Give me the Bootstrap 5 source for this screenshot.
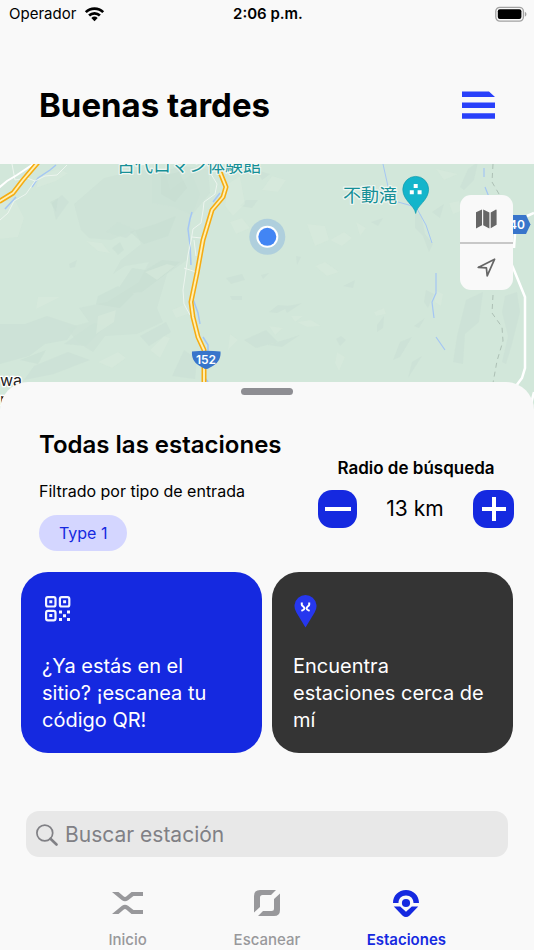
<!DOCTYPE html>
<html lang="es">
<head>
<meta charset="utf-8">
<meta name="viewport" content="width=device-width, initial-scale=1">
<title>Estaciones</title>
<link rel="stylesheet" href="https://cdn.jsdelivr.net/npm/bootstrap@5.3.0/dist/css/bootstrap.min.css">
<style>
  body { font-family: Inter, "Noto Sans CJK JP", sans-serif; background: #f9f9f9; color: #000; font-size: 16px; line-height: 20px; }
  svg { display: block; }
  .status-bar { height: 28px; padding: 0 7px 0 9px; font-size: 15px; }
  .top-head { height: 136px; padding: 18px 39px 0 39px; }
  .greeting { font-size: 33px; line-height: 40px; font-weight: 700; }
  .map-area svg.map-art { width: 100%; height: 254px; }
  .map-tools { top: 31px; right: 21px; width: 53px; background: #f9f9f9; border-radius: 11px; }
  .map-tools button { height: 47px; }
  .map-tools button + button { border-top: 2px solid #c8c8c8 !important; height: 48px; }
  .sheet { margin-top: -36px; background: #f9f9f9; border-radius: 28px 28px 0 0; padding-top: 6px; }
  .grabber { width: 52px; height: 7px; border-radius: 4px; background: #8e8e93; }
  .filters { padding: 34px 20px 0 39px; }
  .sheet-title { font-size: 24px; line-height: 32px; font-weight: 600; }
  .filter-note { margin: 20px 0 14px; }
  .chip { background: #d4d6ff; color: #1529e0; border-radius: 18px; height: 36px; padding: 0 20px; }
  .radius-box { width: 196px; padding-top: 29px; }
  .radius-title { font-size: 17px; }
  .radius-value { font-size: 21px; line-height: 28px; }
  .step-btn { background: #1529e0; border-radius: 14px; height: 38px; width: 39px; }
  .step-btn.step-plus { width: 41px; }
  .tiles { padding: 21px 21px 0; gap: 10px; }
  .tile { flex: 1 1 0; height: 181px; border-radius: 27px; padding: 22px 28px 19px 21px; font-size: 20px; line-height: 27px; color: #fff; text-decoration: none; }
  .tile-blue { background: #1529e0; }
  .tile-dark { background: #343434; }
  .search-wrap { padding: 58px 26px 0; }
  .search-box { height: 46px; border-radius: 13px; background: #e8e8e8; padding: 1px 10px 0; gap: 7px; }
  .search-box input { font-size: 21px; line-height: 28px; color: #808085; outline: 0; }
  .search-box input::placeholder { color: #808085; opacity: 1; }
  .tabs { padding: 31px 58px 0; font-size: 15px; line-height: 18px; font-weight: 500; }
  .tabs a { flex: 1 1 0; color: #98989b; text-decoration: none; gap: 13px; }
  .tabs a.current { color: #1529e0; font-weight: 600; }
</style>
<script src="https://cdn.jsdelivr.net/npm/bootstrap@5.3.0/dist/js/bootstrap.bundle.min.js"></script>
</head>
<body>
<div class="status-bar d-flex align-items-center">
  <div class="col d-flex align-items-center gap-2">
    <span>Operador</span>
    <svg width="21" height="16" viewBox="0 0 21 16" fill="none" stroke="#000" stroke-width="2.700" aria-hidden="true"><path d="M1.800 6.100a12.500 12.500 0 0 1 17.400 0M5.100 9.500a7.800 7.800 0 0 1 10.800 0"/><path d="M10.500 15.200l-3.200-3.300a4.700 4.700 0 0 1 6.400 0z" fill="#000" stroke="none"/></svg>
  </div>
  <div class="fw-semibold">2:06 p.m.</div>
  <div class="col d-flex justify-content-end">
    <svg width="32" height="16" viewBox="0 0 32 16" aria-hidden="true"><rect x=".8" y="1.300" width="27.600" height="13.800" rx="4" fill="none" stroke="#a2a2a2" stroke-width="1.300"/><rect x="2.800" y="3.300" width="23.600" height="9.800" rx="2" fill="#000"/><path d="M29.800 5.800c2.200.8 2.200 4 0 4.800z" fill="#a2a2a2"/></svg>
  </div>
</div>

<header class="top-head d-flex align-items-center justify-content-between">
  <h1 class="greeting mb-0">Buenas tardes</h1>
  <button class="btn border-0 p-0" type="button" aria-label="Menú">
    <svg width="33" height="28" viewBox="0 0 33 28" fill="#2940fa"><path d="M0 .5h27l6 5.500H0zM0 11.400h33v5.600H0zM0 22.300h33v5.400H0z"/></svg>
  </button>
</header>

<main>
  <section class="map-area position-relative overflow-hidden" aria-label="Mapa">
    <svg class="map-art" viewBox="0 164 534 254" preserveAspectRatio="xMidYMid slice">
      <rect x="-400" y="164" width="1400" height="254" fill="#d2e7da"/>
      <!-- terrain relief -->
      <g fill="#cce1d6">
        <path opacity=".75" d="M74 204l30-26 34-8 27 2 5 18 22-16 8 20-9 24-4 42-20 14-10 34 6 14-26 12-32 2-12 16-16-10-10-14 22-6-10-14 28-6 32-20 10-20-24 4-12 8 8-14 20-16-6-14-24 10-22-2-8-8z"/>
        <path d="M152 175l30-9 26 3 2 24-18 22-18-8-22-4z" opacity=".7"/>
        <path opacity=".8" d="M0 324l25 0 22-8 30 10-10 14-22 4-16 12-29 8zM64 344l30-21 12 3-20 20zM34 366l34-14 22 8-36 14-30 6zM106 232l12-10 18 8-10 8zM69 264l8-4-2 7-5 1zM172 376l12-26 13 9-2 20zM10 330l28-8-18 20zM140 336l26-14 5 10-22 14zM52 203l10-8 7 7-13 18zM244 340l22-10 12 12-22 6z"/>
        <path opacity=".8" d="M226 278l16-4 3 6-14 4zM261 275l8-2-6 6zM230 296l12 0 0 4-10 0zM240 206l6-6 12 0-6 8zM256 170l14 4-8 6zM296 256l5 1-4 8zM269 312l9-7 13 1-14 7zM284 307l18-4-15 10zM268 345l32-10-18 12zM336 339l5-3 5 4-6 6zM377 325l7-9-1 12-6 4zM400 342l12-5-12 20-7 3zM414 326l11-8-6 10zM412 362l10-6-14 22zM343 286l12-6-2 8zM371 222l12-4-5 8zM432 212l12-8-4 14zM468 169l10-7-4 18-10 10-4-3zM415 214l6 0 4 20 8 10-4 8-6-16-8-8zM466 300l17-8-4 30-14 12-2 30-10-2 4-26zM505 296l12-4 3 20-8 32-6 20-4-2 6-26-6-24zM426 290l8 4-6 14-4-6z"/>
      </g>
      <g fill="#c4dacf" opacity=".35">
        <path d="M120 286l12-18 14 2 16-10 18 2-14 12-24 18-22 2zM130 232l26-8 20-8-8 20-24 8zM112 248l8-6 4 8-6 5zM161 176l18-4 8 16-12 14-14-8zM50 202l8-4-2 14zM98 296l20-10 16 8-14 14-24-4zM20 360l26-10-8 14z"/>
      </g>
      <g fill="#daebdd" opacity=".5">
        <path d="M40 175l18-6 10 4-12 8-20 7zM0 200l16 2 8 16-6 19-18 2zM86 241l16 2 8 10-12-2zM145 272l22-8 8 2-18 14zM98 316l18-6-2 12-18 12zM38 297l22 0-24 12zM98 362l20-10 8 6-14 10zM150 350l14-14 6 2-10 20zM228 184l12-8 5 28-12 12-8-10zM262 190l10-14 14 4-8 12zM230 222l12-4 8 10-14 6zM307 224l18 2 4 14-14 6zM330 240l14-8 8 6-10 8zM315 266l10-4 14 10-12 4zM291 316l12 0-8 6zM297 322l14-2 10 6-14 1zM337 352l8 5-6 14-4-8zM436 169l22 5-14 6zM449 203l10-2 2 10-8 3zM356 222l10 6-6 8zM374 312l10-4 2 6-10 2zM269 326l14 2-8 7zM435 290l8 4-2 12-6-4zM230 334l8 6-10 10zM172 310l14-6 2 10-12 4z"/>
      </g>
      <!-- streams -->
      <g fill="none" stroke="#a4c6f4" stroke-width="1.500">
        <path d="M56 165l-6 5-12 8-6 9M16 197L5 209M192 212l-2 7-2 10 2 16 1 20M220 193l-7 9M193 299l5 14 2 11M203 337l5 8v6M205 378l3 4"/>
        <path d="M383 164l6 27M398 202l18 5 10 18 6 18" stroke-width="1"/>
        <path d="M436 273v20l-4 9 2 16M436 337l9 13M484 168v9M485 187l4 10" stroke-width="1.200"/>
      </g>
      <!-- minor roads -->
      <path fill="none" stroke="#edf5ef" stroke-width="1" d="M67 165l-10 10-12 1-10 5-9 13-12 7-6 12-8 7M12 164l3 16 12-2 8 3M211 174l6 10-2 10-11 8-1 9-2 12-8 6-2 12-3 14-3 22-2 13 1 14 6 11M184 268l12 4M192 237l9 1M194 240l2 16"/>
      <path d="M-5 191l12-10 10-6 18-12" fill="none" stroke="#fff" stroke-width="2"/>
      <path d="M534 213l-7 3M515 234l-1 14M511 263l3 7 11 27v71l-3 10-6 8M534 392l-4 16" fill="none" stroke="#fff" stroke-width="2.500"/>
      <path d="M493 164l-1 18 7 12v14M493 295l-1 18 10 14 1 14-6 20-4 22" fill="none" stroke="#adc0b5" stroke-width="1" stroke-dasharray="5 4"/>
      <!-- main roads -->
      <g fill="none" stroke-linejoin="round">
        <path d="M-6 203l6-2 13-8 10-13 17-20M220 172l6 15-3 10-11 13-9 30-6 33-6 29 2 15 5 20 6 13v40" stroke="#f5ac12" stroke-width="5"/>
        <path d="M-6 203l6-2 13-8 10-13 17-20M220 172l6 15-3 10-11 13-9 30-6 33-6 29 2 15 5 20 6 13v40" stroke="#fff0b5" stroke-width="1.900"/>
      </g>
      <!-- place labels -->
      <g font-family="'Noto Sans CJK JP', sans-serif" font-size="18" font-weight="400" fill="#168f96" stroke="#eef7f2" stroke-width="2.400" stroke-linejoin="round" paint-order="stroke">
        <text x="117" y="172">古代ロマン体験館</text>
        <text x="343" y="202">不動滝</text>
      </g>
      <path d="M415.700 213.500c-1-8-12.900-13-12.900-24.200a12.900 12.900 0 0 1 25.800 0c0 11.200-11.900 16.200-12.900 24.200z" fill="#14b5cb" stroke="#119aab" stroke-width=".7"/>
      <path d="M413.700 184h4v4h-4zM409.800 190.200h4v4h-4zM417.600 190.200h4v4h-4z" fill="#fff"/>
      <path d="M192 351.500q14-1.500 28.500 0c.6 6-2 11-7 14-3 1.600-5 3.500-7.300 3.500s-4.200-1.900-7.200-3.500c-5-3-7.600-8-7-14z" fill="#3875cb"/>
      <path d="M500 215h26l4.500 9.500-4.500 9.500h-26z" fill="#3875cb"/>
      <g font-family="Inter, sans-serif" font-weight="600" fill="#fff" font-size="12">
        <text x="206" y="364" text-anchor="middle">152</text>
        <text x="504" y="229">140</text>
      </g>
      <g font-family="Inter, sans-serif" font-size="16" fill="#222" stroke="#fff" stroke-width="2.500" paint-order="stroke">
        <text x="22" y="386" text-anchor="end">wa</text>
        <text x="0" y="405">r</text>
      </g>
      <circle cx="267.300" cy="236.800" r="18" fill="#4285e8" opacity=".24"/>
      <circle cx="267.300" cy="236.800" r="11" fill="#fff"/>
      <circle cx="267.300" cy="236.800" r="9" fill="#4285f4"/>
    </svg>
    <div class="map-tools position-absolute d-flex flex-column">
      <button class="btn border-0 rounded-0 p-0 d-flex align-items-center justify-content-center" type="button" aria-label="Tipo de mapa">
        <svg width="21" height="20" viewBox="0 0 21 20" fill="#666"><path d="M0 3.200L6 .6v15.600L0 19.400zM7.200.6l6.200 3v15.800l-6.200-3.200zM14.700 3.600L19.600.7c.6-.3 1 0 1 .5v14.600l-5.900 3.400z"/></svg>
      </button>
      <button class="btn border-0 rounded-0 p-0 d-flex align-items-center justify-content-center" type="button" aria-label="Mi ubicación">
        <svg width="19" height="19" viewBox="0 0 19 19" fill="none" stroke="#666" stroke-width="1.700" stroke-linejoin="round"><path d="M17.600 1.200L1.200 9.400l8.200.5.800 7.900z"/></svg>
      </button>
    </div>
  </section>

  <section class="sheet position-relative">
    <div class="grabber mx-auto"></div>
    <div class="filters d-flex justify-content-between">
      <div>
        <h2 class="sheet-title mb-0 text-nowrap">Todas las estaciones</h2>
        <p class="filter-note text-nowrap">Filtrado por tipo de entrada</p>
        <button class="chip btn border-0" type="button">Type 1</button>
      </div>
      <div class="radius-box flex-shrink-0">
        <div class="radius-title fw-semibold text-center">Radio de búsqueda</div>
        <div class="d-flex align-items-center justify-content-between mt-2 pt-1">
          <button class="step-btn btn border-0 p-0 d-flex align-items-center justify-content-center" type="button" aria-label="Reducir radio"><svg width="26" height="4" viewBox="0 0 26 4"><path d="M0 0h26v4H0z" fill="#fff"/></svg></button>
          <span class="radius-value">13 km</span>
          <button class="step-btn step-plus btn border-0 p-0 d-flex align-items-center justify-content-center" type="button" aria-label="Aumentar radio"><svg width="24" height="24" viewBox="0 0 24 24"><path d="M0 10h10V0h4v10h10v4H14v10h-4V14H0z" fill="#fff"/></svg></button>
        </div>
      </div>
    </div>

    <div class="tiles d-flex">
      <a class="tile tile-blue d-flex flex-column justify-content-between" href="#">
        <svg width="29" height="30" viewBox="-3 0 29 30" fill="none" stroke="#f4f6ff" stroke-width="2.200"><rect x="1.100" y="3.100" width="9.400" height="9.400" rx="1.800"/><rect x="14.900" y="3.100" width="9.400" height="9.400" rx="1.800"/><rect x="1.100" y="16.900" width="9.400" height="9.400" rx="1.800"/><path d="M4.300 6.300h3v3h-3zM18.100 6.300h3v3h-3zM4.300 20.100h3v3h-3zM14 16.500h3v3h-3zM22 16.500h3v3h-3zM18 20.200h3v3h-3zM14 24h3v3h-3zM22 24h3v3h-3z" fill="#f4f6ff" stroke="none"/></svg>
        <span>¿Ya estás en el sitio? ¡escanea tu código QR!</span>
      </a>
      <a class="tile tile-dark d-flex flex-column justify-content-between" href="#">
        <svg width="25" height="34" viewBox="0 0 25 34"><path d="M12.500 33.500L3.400 18.500A11 11.200 0 1 1 21.600 18.500z" fill="#2637ee"/><g fill="none" stroke="#fff" stroke-width="2"><path d="M8.800 8.500v2.200c0 1.400 2.600 1.800 2.600 3.600s-1.400 1.800-3 2.500M16.200 8.500v2.200c0 1.400-2.600 1.800-2.600 3.600s1.400 1.800 3 2.500"/></g></svg>
        <span>Encuentra estaciones cerca de mí</span>
      </a>
    </div>

    <div class="search-wrap">
      <label class="search-box d-flex align-items-center">
        <svg class="flex-shrink-0" width="22" height="22" viewBox="0 0 22 22" fill="none" stroke="#808085"><circle cx="8.800" cy="9" r="7.900" stroke-width="1.700"/><path d="M14.500 14.700l6 5.800" stroke-width="2.600" stroke-linecap="round"/></svg>
        <input class="bg-transparent border-0 p-0 w-100" type="text" placeholder="Buscar estación" aria-label="Buscar estación">
      </label>
    </div>
  </section>
</main>

<nav class="tabs d-flex" aria-label="Principal">
  <a class="d-flex flex-column align-items-center" href="#">
    <svg width="31" height="30" viewBox="0 0 31 30" fill="#98989b"><path d="M0 4h6.500l5 4.300q1.500 1.200 3 0L19.500 4H31v4h-9.500l-5.500 4.300q-3 1.900-6 0zM0 26h6.500l5-4.300q1.500-1.200 3 0l5 4.300H31v-4h-9.500L16 17.700q-3-1.900-6 0z"/></svg>
    Inicio
  </a>
  <a class="d-flex flex-column align-items-center" href="#">
    <svg width="26" height="30" viewBox="0 0 26 30" fill="#98989b"><path d="M6 2h16l-5 5H8.500Q6 7 6 9.500V19l-6 5.500V8q0-6 6-6zM26 5.500V22q0 6-6 6H4l5-5h8.500q2.500 0 2.500-2.500V11z"/></svg>
    Escanear
  </a>
  <a class="current d-flex flex-column align-items-center" href="#" aria-current="page">
    <svg width="26" height="30" viewBox="0 0 26 30" fill="#1529e0"><path d="M0 15C0 7.500 5.500 2 13 2s13 5.500 13 13h-5.500c0-4.500-3-7.500-7.500-7.500S5.500 10.500 5.500 15z"/><circle cx="13" cy="15" r="4.100"/><path d="M.8 18.500h6.400L13 23.800l5.800-5.300h6.400l-8.600 8.900q-3.600 3-7.200 0z"/></svg>
    Estaciones
  </a>
</nav>
</body>
</html>
